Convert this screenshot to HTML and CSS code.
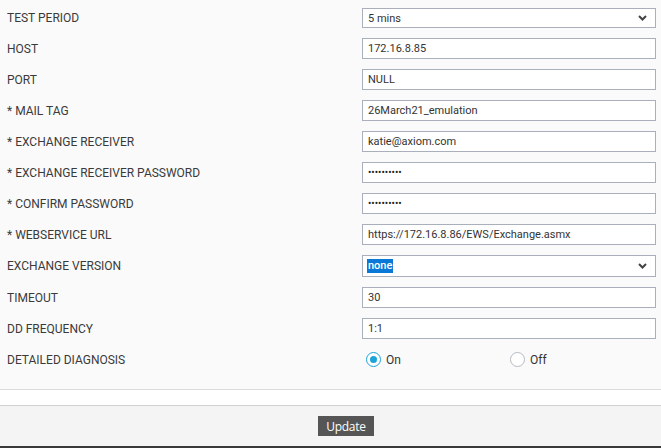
FILE: index.html
```html
<!DOCTYPE html>
<html>
<head>
<meta charset="utf-8">
<link rel="stylesheet" href="styles.css">
</head>
<body>
<div class="page">
  <form class="form">
    <div class="row short">
      <label class="label">TEST PERIOD</label>
      <div class="field select first">
        <span class="val">5 mins</span>
        <svg class="chev" width="9" height="6" viewBox="0 0 9 6"><path d="M1 1 L4.5 4.5 L8 1" fill="none" stroke="#444" stroke-width="2"/></svg>
      </div>
    </div>
    <div class="row">
      <label class="label">HOST</label>
      <input class="field" type="text" value="172.16.8.85">
    </div>
    <div class="row">
      <label class="label">PORT</label>
      <input class="field" type="text" value="NULL">
    </div>
    <div class="row">
      <label class="label">* MAIL TAG</label>
      <input class="field" type="text" value="26March21_emulation">
    </div>
    <div class="row">
      <label class="label">* EXCHANGE RECEIVER</label>
      <input class="field" type="text" value="katie@axiom.com">
    </div>
    <div class="row">
      <label class="label">* EXCHANGE RECEIVER PASSWORD</label>
      <input class="field pw" type="password" value="**********">
    </div>
    <div class="row">
      <label class="label">* CONFIRM PASSWORD</label>
      <input class="field pw" type="password" value="**********">
    </div>
    <div class="row">
      <label class="label">* WEBSERVICE URL</label>
      <input class="field" type="text" value="https://172.16.8.86/EWS/Exchange.asmx">
    </div>
    <div class="row tall">
      <label class="label">EXCHANGE VERSION</label>
      <div class="field select">
        <span class="val hl">none</span>
        <svg class="chev" width="9" height="6" viewBox="0 0 9 6"><path d="M1 1 L4.5 4.5 L8 1" fill="none" stroke="#444" stroke-width="2"/></svg>
      </div>
    </div>
    <div class="row">
      <label class="label">TIMEOUT</label>
      <input class="field" type="text" value="30">
    </div>
    <div class="row">
      <label class="label">DD FREQUENCY</label>
      <input class="field" type="text" value="1:1">
    </div>
    <div class="row">
      <label class="label">DETAILED DIAGNOSIS</label>
      <div class="radios">
        <label class="radio"><span class="dot on"></span>On</label>
        <label class="radio"><span class="dot"></span>Off</label>
      </div>
    </div>
  </form>
  <div class="spacer"></div>
  <div class="footer">
    <button class="btn" type="button">Update</button>
  </div>
</div>
</body>
</html>
```

FILE: styles.css
```css
* { box-sizing: border-box; }
html, body { margin: 0; padding: 0; }
body {
  background: #fafafa;
  font-family: Roboto, "Liberation Sans", Arial, sans-serif;
  color: #333;
  width: 661px;
  height: 448px;
  overflow: hidden;
}
.page {
  display: flex;
  flex-direction: column;
  height: 448px;
}
.form {
  display: flex;
  flex-direction: column;
  gap: 10px;
  padding: 8px 5px 19px 7px;
  background: #fafafa;
  border-bottom: 1px solid #dcdcdc;
}
.row {
  display: flex;
  align-items: center;
  height: 21px;
}
.row.short { height: 20px; }
.label {
  width: 355px;
  font-size: 12px;
  color: #3a3a3a;
}
.field {
  flex: 1;
  height: 21px;
  border: 1px solid #a9afbb;
  background: #fff;
  font-family: Roboto, "Liberation Sans", Arial, sans-serif;
  font-size: 11px;
  color: #333;
  padding: 0 5px;
  margin: 0;
  outline: none;
}
.field.first { height: 20px; }
.pw { font-size: 10px; letter-spacing: 0; color: #222; }
.select {
  display: flex;
  align-items: center;
  justify-content: space-between;
  padding-right: 8px;
}
.row.tall { height: 22px; }
.row.tall .field { height: 22px; }
.hl {
  background: #0a78d7;
  color: #fff;
  padding: 0 1px;
  margin-left: -1px;
  font-weight: 500;
  line-height: 14px;
}
.chev { display: block; }
.radios {
  flex: 1;
  display: flex;
  align-items: center;
  padding-left: 4px;
}
.radio {
  display: flex;
  align-items: center;
  gap: 5px;
  width: 144px;
  font-size: 12px;
  color: #333;
}
.dot {
  width: 15px;
  height: 15px;
  border-radius: 50%;
  border: 1.5px solid #b5bac2;
  background: #fff;
  position: relative;
}
.dot.on { border-color: #1ba4d8; }
.dot.on::after {
  content: "";
  position: absolute;
  left: 2.5px;
  top: 2.5px;
  width: 7px;
  height: 7px;
  border-radius: 50%;
  background: #1ba4d8;
}
.spacer {
  height: 16px;
  background: #fff;
  border-bottom: 1px solid #d0d0d0;
}
.footer {
  flex: 1;
  background: #f4f4f4;
  border-bottom: 2px solid #3a3a3a;
  display: flex;
  justify-content: center;
  align-items: flex-start;
  padding-top: 10px;
}
.btn {
  background: #555;
  color: #fff;
  border: none;
  font-family: "Open Sans", "Liberation Sans", Arial, sans-serif;
  font-size: 12px;
  font-weight: 500;
  height: 20px;
  padding: 0 8px;
  margin-left: 31px;
  letter-spacing: -0.3px;
}
```
